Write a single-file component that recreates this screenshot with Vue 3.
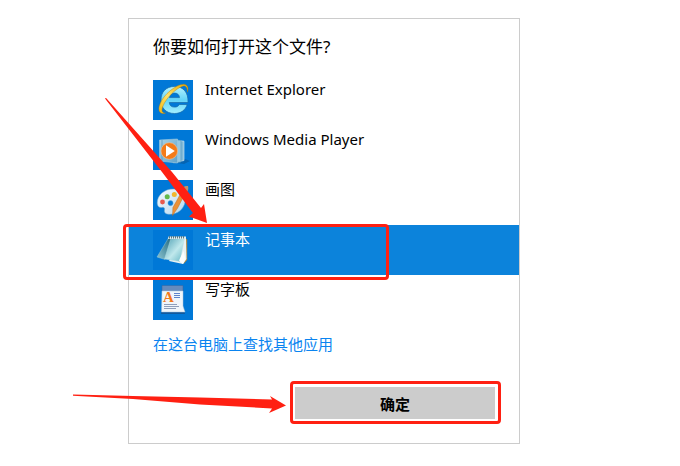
<script setup>
import { ref } from 'vue'

const apps = [
  { id: 'ie', name: 'Internet Explorer' },
  { id: 'wmp', name: 'Windows Media Player' },
  { id: 'paint', name: '画图' },
  { id: 'notepad', name: '记事本' },
  { id: 'wordpad', name: '写字板' }
]
const selected = ref('notepad')
</script>

<template>
  <main class="page">
    <section class="dialog" aria-labelledby="dialog-title">
      <h1 id="dialog-title" class="title">你要如何打开这个文件?</h1>

      <ul class="apps">
        <li v-for="app in apps" :key="app.id" class="item">
          <button
            type="button"
            class="app"
            :class="{ selected: app.id === selected }"
            :aria-pressed="app.id === selected"
            @click="selected = app.id"
          >
            <svg class="icon" viewBox="0 0 40 40" aria-hidden="true">
              <defs>
                <linearGradient id="ie-blue" x1="0" y1="0" x2="0" y2="1">
                  <stop offset="0" stop-color="#b5f3ff" />
                  <stop offset=".5" stop-color="#63d4f8" />
                  <stop offset="1" stop-color="#a4efff" />
                </linearGradient>
                <linearGradient id="gold" x1="0" y1="1" x2="1" y2="0">
                  <stop offset="0" stop-color="#f3b50d" />
                  <stop offset=".45" stop-color="#ffe36a" />
                  <stop offset="1" stop-color="#e9a800" />
                </linearGradient>
                <linearGradient id="glass" x1="0" y1="0" x2="1" y2="1">
                  <stop offset="0" stop-color="#a9d3e8" />
                  <stop offset="1" stop-color="#5fa3cb" />
                </linearGradient>
                <linearGradient id="palette" x1="0" y1="0" x2="1" y2="1">
                  <stop offset="0" stop-color="#f4faff" />
                  <stop offset="1" stop-color="#b5d8ef" />
                </linearGradient>
                <linearGradient id="pad" x1="0" y1="0" x2="1" y2="1">
                  <stop offset="0" stop-color="#4a9db2" />
                  <stop offset=".55" stop-color="#c0e8ec" />
                  <stop offset="1" stop-color="#5fb3c2" />
                </linearGradient>
                <linearGradient id="flap" x1="1" y1="0" x2="0" y2="1">
                  <stop offset="0" stop-color="#20687f" />
                  <stop offset="1" stop-color="#8cc4d0" />
                </linearGradient>
              </defs>

              <g v-if="app.id === 'ie'">
                <path fill="url(#ie-blue)" stroke="#1769a8" stroke-width=".7" fill-rule="evenodd" d="M21.500 6.500C13 6.500 8 12 8 20s5 13.500 13.500 13.500c6.500 0 11-3.500 12.700-9h-8c-.8 1.800-2.500 2.600-4.500 2.600-3.200 0-5.200-1.600-5.400-4.600H35C35.500 12.500 30.500 6.500 21.500 6.500zM16.400 17.600c.5-3 2.300-4.500 5.100-4.500s4.700 1.500 5 4.500z" />
                <path fill="url(#gold)" stroke="#a77710" stroke-width=".4" d="M34.500 12.200C36 8 34.500 4.200 30.500 4.300 23 4.500 10.500 14.500 7 24c-3 7 .5 11 5.500 9-3.500.2-4.400-2.500-2.500-7C13.500 17.500 23 8.500 29.500 6.200c3.500-1.200 5 1.800 5 6z" />
              </g>

              <g v-else-if="app.id === 'wmp'">
                <path fill="#0b4c86" opacity=".45" d="M9 31l22 3 6-3-5-2z" />
                <path fill="#80b9d8" stroke="#dcf0fa" stroke-width=".6" d="M22 10l9 1.200v19.300l-9 2z" />
                <path fill="#95c8e2" stroke="#4e91b9" stroke-width=".6" d="M20 9.500l8 1v21.500l-8 1z" />
                <path fill="url(#glass)" stroke="#9cc9e0" stroke-width=".6" d="M6.500 10l18-1v24l-18-2z" />
                <path stroke="#4f8fb9" stroke-width=".7" d="M9 10v21" />
                <circle cx="16.300" cy="21" r="8.300" fill="#f47b19" stroke="#ffc38a" stroke-width=".6" />
                <path fill="#fff" d="M13 15.300v11.400l8.800-5.700z" />
              </g>

              <g v-else-if="app.id === 'paint'">
                <path fill="url(#palette)" stroke="#6ba7ce" stroke-width=".5" fill-rule="evenodd" d="M21 9C12 8.500 4 15 4.200 23c.1 3.500 2.300 5 4.800 4.400 2-.5 3 .7 2.500 2.600-.7 2.700 1.500 4.300 5 4.300C24.500 34.500 31 29 32 22c1-7-4-12.600-11-13zM17.500 20.500a2.600 2.600 0 1 1 0 5.200 2.600 2.600 0 0 1 0-5.200z" />
                <circle cx="9.500" cy="22" r="2.400" fill="#e7594e" />
                <circle cx="14.200" cy="16.800" r="2.500" fill="#62b94c" />
                <circle cx="21.300" cy="14.500" r="2.500" fill="#f0b72f" />
                <path fill="#eb9137" stroke="#b76419" stroke-width=".4" d="M28.500 12l3.200 2.200-7 13.800-5.200 7.600.4-8z" />
                <path fill="#bd936b" d="M28 12c0-4 3-6.500 7-6 1 3-.5 7-3.700 8.500z" />
              </g>

              <g v-else-if="app.id === 'notepad'">
                <path fill="#a8853f" d="M32 8l2.200 1.500V30l-3.700 4z" />
                <path fill="#e9f2f3" d="M30 8h3l.5 21-3.500 5-14-3z" />
                <path fill="url(#flap)" stroke="#a9d2da" stroke-width=".4" d="M15.500 8L4 27l8 2.500 7-21.500z" />
                <path fill="url(#pad)" stroke="#b9dde3" stroke-width=".4" d="M18 8h13.500L27 31.500 11.500 29z" />
                <path fill="#fbfdfd" d="M30.500 21L26 30.500l4 3.500 2.500-5z" />
                <path fill="#ddebee" d="M15.500 6.500H33v2.500H15z" />
                <path stroke="#5d7b83" stroke-width="2.500" stroke-dasharray="1 1" d="M16 7.200h16" />
              </g>

              <g v-else>
                <path fill="#174c84" opacity=".7" d="M9 29h22l1 5H8z" />
                <path fill="#668bbd" stroke="#34639f" stroke-width=".5" d="M9 5.500h21v6H9z" />
                <path fill="#eff6fb" stroke="#a9c3d9" stroke-width=".5" d="M9 11h21v15l2 6H8.500z" />
                <text class="wordpad-letter" x="10" y="22">A</text>
                <path stroke="#5f83cc" stroke-width="1" d="M21 13.500h6M21 15.500h6M21 17.500h6" />
                <path stroke="#8e9fbb" stroke-width="1" d="M11 24.500h13M11 26.500h15M11 28.500h12" />
              </g>
            </svg>
            <span class="name">{{ app.name }}</span>
          </button>
          <span v-if="app.id === 'notepad'" class="mark mark-row"></span>
        </li>
      </ul>

      <a class="more" href="#apps">在这台电脑上查找其他应用</a>

      <div class="actions">
        <div class="confirm-wrap">
          <button type="button" class="confirm">确定</button>
          <span class="mark mark-confirm"></span>
          <svg class="arrow arrow-confirm" viewBox="0 0 214 20" aria-hidden="true">
            <path d="M0 1.500L60 3 127 4.500 199 6.500 197 3 213 12.500 196 20 199 15.500 127 11.500 60 6 0 2.800z" />
          </svg>
        </div>
      </div>

      <svg class="arrow arrow-row" viewBox="0 0 104 126" aria-hidden="true">
        <path d="M0 .5Q.8-.5 2 1L67 74 96 110 99 106 102 125 84 118.500 88 115 57 74z" />
      </svg>
    </section>
  </main>
</template>

<style>
body {
  margin: 0;
  background: #fff;
}
</style>

<style scoped>
.page {
  padding: 18px 160px 22px 128px;
  font-family: "Noto Sans", "Noto Sans CJK SC", sans-serif;
  font-size: 15px;
  color: #000;
}

.dialog {
  position: relative;
  border: 1px solid #ccc;
  background: #fff;
  padding: 16px 0 24px;
}

.title {
  margin: 0 24px 16px;
  font-size: 17px;
  line-height: 24px;
  font-weight: 400;
}

.apps {
  list-style: none;
  margin: 0;
  padding: 0;
}

.item {
  position: relative;
}

.app {
  display: flex;
  align-items: flex-start;
  gap: 12px;
  width: 100%;
  padding: 5px 24px;
  border: 0;
  background: transparent;
  color: inherit;
  font: inherit;
  text-align: left;
  cursor: pointer;
}

.app.selected {
  background: #0c83db;
  color: #fff;
}

.icon {
  flex: none;
  width: 40px;
  height: 40px;
  background: #0078d7;
  fill: none;
}

.wordpad-letter {
  font: bold 15px "Liberation Serif", serif;
  fill: #f27a1a;
}

.name {
  line-height: 18px;
}

.more {
  display: block;
  margin: 8px 24px 0;
  line-height: 22px;
  color: #0a84f0;
  text-decoration: none;
}

.actions {
  display: flex;
  justify-content: flex-end;
  padding: 32px 24px 0;
}

.confirm-wrap {
  position: relative;
  width: 200px;
}

.confirm {
  display: block;
  width: 100%;
  height: 32px;
  padding: 0;
  border: 0;
  background: #ccc;
  color: #000;
  font: inherit;
  font-weight: 700;
}

.mark {
  position: absolute;
  z-index: 1;
  box-sizing: border-box;
  border: 3px solid #ff2012;
  border-radius: 4px;
  pointer-events: none;
}

.mark-row {
  top: -1px;
  bottom: -5px;
  left: -6px;
  width: 266px;
}

.mark-confirm {
  inset: -6px -6px -5px -5px;
}

.arrow {
  position: absolute;
  z-index: 2;
  fill: #ff2012;
  pointer-events: none;
}

.arrow-confirm {
  top: 6px;
  left: -222px;
  width: 214px;
  height: 20px;
}

.arrow-row {
  top: 79px;
  left: -24px;
  width: 104px;
  height: 126px;
}
</style>
